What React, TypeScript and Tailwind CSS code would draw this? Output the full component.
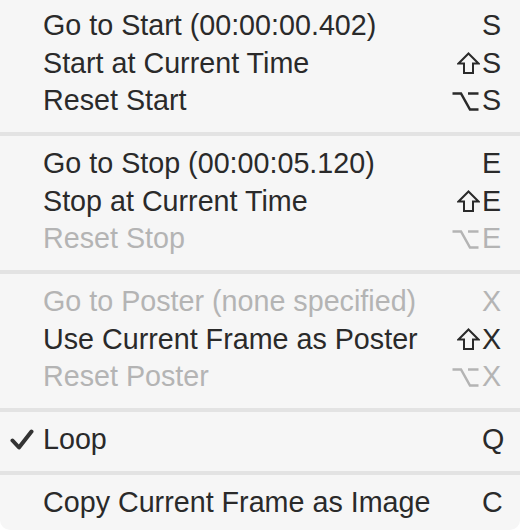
import React from "react";

type Mod = "" | "shift" | "opt";
type Item = { label: string; key: string; mod: Mod; disabled?: boolean; checked?: boolean };

const sections: Item[][] = [
  [
    { label: "Go to Start (00:00:00.402)", key: "S", mod: "" },
    { label: "Start at Current Time", key: "S", mod: "shift" },
    { label: "Reset Start", key: "S", mod: "opt" },
  ],
  [
    { label: "Go to Stop (00:00:05.120)", key: "E", mod: "" },
    { label: "Stop at Current Time", key: "E", mod: "shift" },
    { label: "Reset Stop", key: "E", mod: "opt", disabled: true },
  ],
  [
    { label: "Go to Poster (none specified)", key: "X", mod: "", disabled: true },
    { label: "Use Current Frame as Poster", key: "X", mod: "shift" },
    { label: "Reset Poster", key: "X", mod: "opt", disabled: true },
  ],
  [{ label: "Loop", key: "Q", mod: "", checked: true }],
  [{ label: "Copy Current Frame as Image", key: "C", mod: "" }],
];

function ShiftIcon() {
  return (
    <svg width="23" height="23" viewBox="0 0 23 23" className="mr-[2px] mt-[1px]">
      <path
        d="M11.5 1.5 L21.5 11.5 H16 V21 H7 V11.5 H1.5 Z"
        fill="none"
        stroke="currentColor"
        strokeWidth="2"
        strokeLinejoin="miter"
      />
    </svg>
  );
}

function OptIcon() {
  return (
    <svg width="27" height="22" viewBox="0 0 27 22" className="mr-[3px] mt-[1px]">
      <path d="M0.5 3.5 H9 L18 19.5 H26.5" fill="none" stroke="currentColor" strokeWidth="2.5" />
      <path d="M16 3.5 H26.5" fill="none" stroke="currentColor" strokeWidth="2.5" />
    </svg>
  );
}

function Check() {
  return (
    <svg width="24" height="22" viewBox="0 0 24 22">
      <path
        d="M2.5 11.5 L9 18.5 L21.5 2.5"
        fill="none"
        stroke="currentColor"
        strokeWidth="4"
        strokeLinecap="round"
        strokeLinejoin="round"
      />
    </svg>
  );
}

function Row({ item }: { item: Item }) {
  const color = item.disabled ? "text-[#b4b4b4]" : "text-[#2a2a2a]";
  return (
    <div className={`flex h-[37.5px] items-center ${color}`}>
      <div className="flex w-[43px] justify-end pr-[9px] text-[#333333]">
        {item.checked ? <Check /> : null}
      </div>
      <div className="flex-1 whitespace-nowrap">{item.label}</div>
      <div className="flex items-center justify-end">
        {item.mod === "shift" ? <ShiftIcon /> : null}
        {item.mod === "opt" ? <OptIcon /> : null}
      </div>
      <div className="w-[38px]">{item.key}</div>
    </div>
  );
}

export default function App() {
  return (
    <div className="h-[530px] w-[520px] bg-white">
      <div
        className="h-[530px] w-[520px] overflow-hidden rounded-b-[10px] bg-[#f6f6f6] pt-[7px] text-[28.7px] leading-[37.5px]"
        style={{ fontFamily: '"Liberation Sans", Arial, sans-serif' }}
      >
        {sections.map((sec, i) => (
          <div key={i}>
            {i > 0 ? (
              <div className="pb-[9.5px] pt-[12px]">
                <div className="h-[4px] bg-[#e3e3e3]" />
              </div>
            ) : null}
            {sec.map((it, j) => (
              <Row key={j} item={it} />
            ))}
          </div>
        ))}
      </div>
    </div>
  );
}
